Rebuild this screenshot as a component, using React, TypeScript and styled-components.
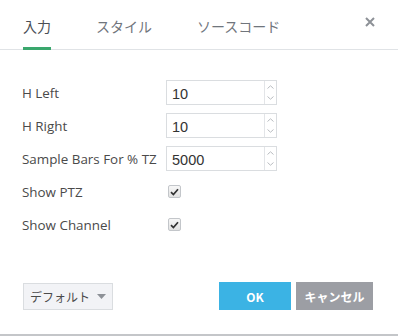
import React from "react";
import styled, { createGlobalStyle } from "styled-components";

const Global = createGlobalStyle`
  html, body { margin: 0; padding: 0; background: #ffffff; }
  body { font-family: "Open Sans", "Noto Sans CJK JP", sans-serif; }
`;

const Dialog = styled.div`
  width: 398px;
  height: 334px;
  border-bottom: 2px solid #c4c6c9;
  background: #fff;
  display: flex;
  flex-direction: column;
  position: relative;
`;

const Header = styled.div`
  height: 49px;
  border-bottom: 1px solid #e0e3e6;
  display: flex;
  align-items: stretch;
  padding-left: 23px;
  gap: 45px;
  position: relative;
`;

const Tab = styled.div<{ $active?: boolean }>`
  font-family: "Noto Sans CJK JP", sans-serif;
  font-size: 14px;
  color: ${(p) => (p.$active ? "#4a4e55" : "#70757c")};
  display: flex;
  align-items: center;
  padding-top: 2px;
  position: relative;
  &::after {
    content: "";
    display: ${(p) => (p.$active ? "block" : "none")};
    position: absolute;
    left: 0;
    right: 0;
    bottom: -1px;
    height: 3px;
    background: #3aa76d;
  }
`;

const Close = styled.div`
  position: absolute;
  right: 21px;
  top: 15px;
  width: 14px;
  height: 14px;
  display: flex;
  align-items: center;
  justify-content: center;
`;

const Form = styled.div`
  display: grid;
  grid-template-columns: 144px 111px;
  grid-auto-rows: 25px;
  row-gap: 8px;
  padding: 30px 0 0 22px;
  align-items: center;
`;

const Label = styled.div`
  font-family: "Open Sans", sans-serif;
  font-size: 13.4px;
  color: #4a4a4a;
  white-space: nowrap;
`;

const InputBox = styled.div`
  height: 25px;
  box-sizing: border-box;
  border: 1px solid #dadde0;
  display: flex;
  align-items: stretch;
`;

const Value = styled.div`
  flex: 1;
  font-family: "Liberation Sans", Arial, sans-serif;
  font-size: 14.5px;
  color: #333;
  display: flex;
  align-items: center;
  padding-left: 5px;
  padding-top: 2px;
`;

const Spinner = styled.div`
  width: 11px;
  border-left: 1px solid #e3e5e8;
  display: flex;
  flex-direction: column;
`;

const SpinBtn = styled.div`
  flex: 1;
  display: flex;
  align-items: center;
  justify-content: center;
`;

const CheckBox = styled.div`
  width: 11px;
  height: 11px;
  border: 1px solid #c3c6ca;
  border-radius: 2px;
  background: linear-gradient(#f7f7f7, #e2e2e2);
  display: flex;
  align-items: center;
  justify-content: center;
  margin-left: 2px;
`;

const Footer = styled.div`
  margin-top: auto;
  margin-bottom: 24px;
  display: flex;
  align-items: center;
  padding: 0 25px 0 23px;
`;

const DefaultBtn = styled.div`
  width: 90px;
  height: 27px;
  box-sizing: border-box;
  border: 1px solid #dadde0;
  background: #f2f3f6;
  display: flex;
  align-items: center;
  justify-content: center;
  gap: 7px;
  font-family: "Noto Sans CJK JP", sans-serif;
  font-size: 12px;
  color: #4a4a4a;
`;

const Spacer = styled.div`
  flex: 1;
`;

const ActionBtn = styled.div<{ $bg: string; $w: number }>`
  width: ${(p) => p.$w}px;
  height: 28px;
  background: ${(p) => p.$bg};
  color: #fff;
  font-family: "Noto Sans CJK JP", sans-serif;
  font-weight: 700;
  font-size: 12px;
  display: flex;
  align-items: center;
  justify-content: center;
  & + & {
    margin-left: 5px;
  }
`;

const Up = () => (
  <svg width="7" height="4" viewBox="0 0 7 4">
    <path d="M0.5 3.5 L3.5 0.8 L6.5 3.5" stroke="#b9bcc0" fill="none" strokeWidth="1" />
  </svg>
);
const Down = () => (
  <svg width="7" height="4" viewBox="0 0 7 4">
    <path d="M0.5 0.5 L3.5 3.2 L6.5 0.5" stroke="#b9bcc0" fill="none" strokeWidth="1" />
  </svg>
);

const NumberInput = ({ value }: { value: string }) => (
  <InputBox>
    <Value>{value}</Value>
    <Spinner>
      <SpinBtn><Up /></SpinBtn>
      <SpinBtn><Down /></SpinBtn>
    </Spinner>
  </InputBox>
);

const Check = () => (
  <CheckBox>
    <svg width="9" height="8" viewBox="0 0 9 8">
      <path d="M1 4.2 L3.4 6.6 L8 1.2" stroke="#333" strokeWidth="1.7" fill="none" />
    </svg>
  </CheckBox>
);

export default function App() {
  return (
    <>
      <Global />
      <Dialog>
        <Header>
          <Tab $active>入力</Tab>
          <Tab>スタイル</Tab>
          <Tab>ソースコード</Tab>
          <Close>
            <svg width="10" height="10" viewBox="0 0 10 10">
              <path d="M1 1 L9 9 M9 1 L1 9" stroke="#8d9197" strokeWidth="2" />
            </svg>
          </Close>
        </Header>
        <Form>
          <Label>H Left</Label>
          <NumberInput value="10" />
          <Label>H Right</Label>
          <NumberInput value="10" />
          <Label>Sample Bars For % TZ</Label>
          <NumberInput value="5000" />
          <Label>Show PTZ</Label>
          <Check />
          <Label>Show Channel</Label>
          <Check />
        </Form>
        <Footer>
          <DefaultBtn>
            デフォルト
            <svg width="9" height="5" viewBox="0 0 9 5">
              <path d="M0 0 L9 0 L4.5 5 Z" fill="#8d9197" />
            </svg>
          </DefaultBtn>
          <Spacer />
          <ActionBtn $bg="#3bb3e4" $w={72}>OK</ActionBtn>
          <ActionBtn $bg="#9c9ea4" $w={77}>キャンセル</ActionBtn>
        </Footer>
      </Dialog>
    </>
  );
}
